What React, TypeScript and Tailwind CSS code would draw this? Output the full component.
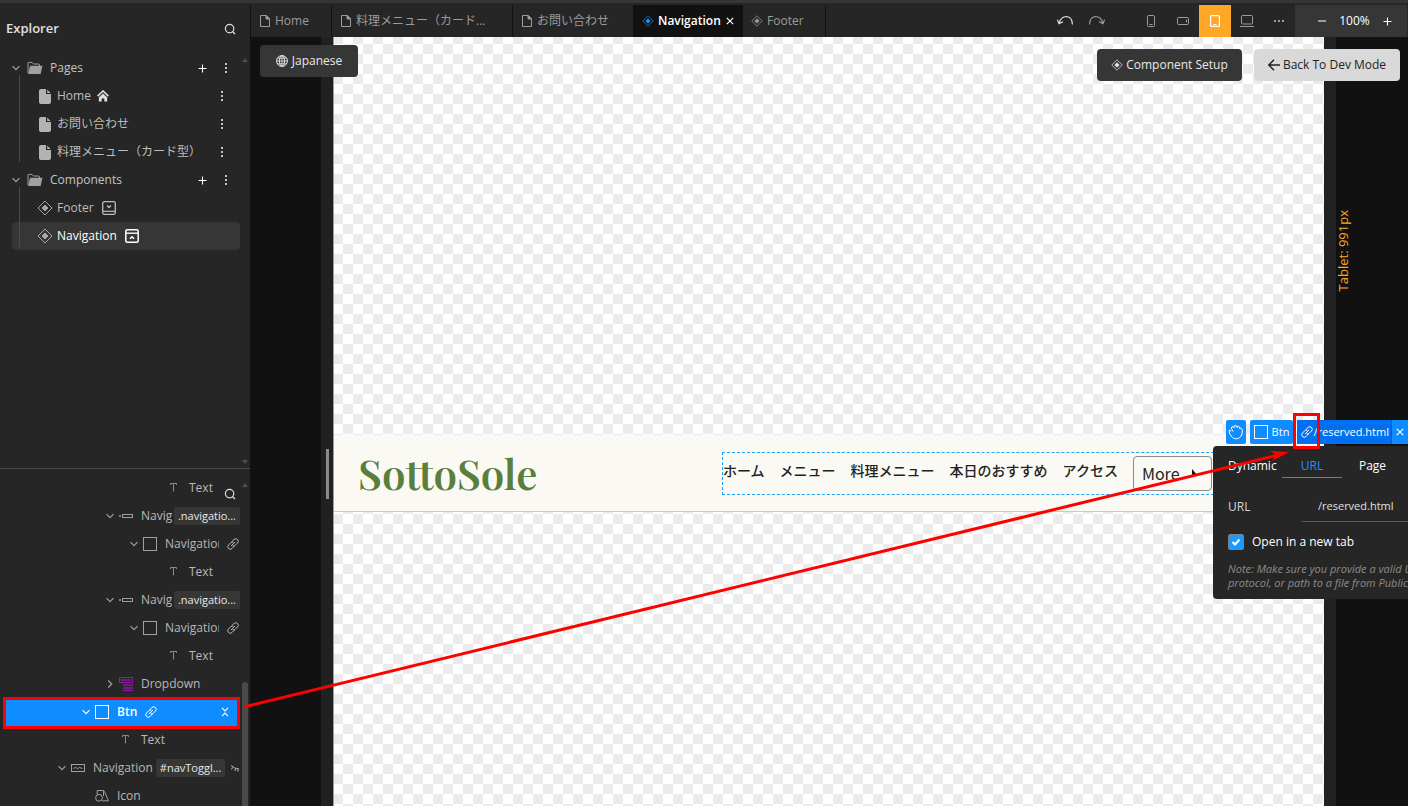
import React, { useState } from "react";

type IconProps = { className?: string };

const stroke = {
  fill: "none",
  stroke: "currentColor",
  "aria-hidden": true,
} as const;

function ChevronIcon({ className = "" }: IconProps) {
  return (
    <svg {...stroke} viewBox="0 0 8 8" className={`w-2 h-2 shrink-0 ${className}`}>
      <path d="M0.5 2.2 4 5.7 7.5 2.2" strokeWidth={1.2} />
    </svg>
  );
}

function SearchIcon() {
  return (
    <svg {...stroke} viewBox="0 0 12 12" className="w-3 h-3">
      <circle cx="5.6" cy="5.6" r="4.2" strokeWidth={1.2} />
      <path d="M8.6 8.6 11 11" strokeWidth={1.3} />
    </svg>
  );
}

function PlusIcon() {
  return (
    <svg {...stroke} viewBox="0 0 9 9" className="w-[9px] h-[9px]">
      <path d="M4.5 0.5v8M0.5 4.5h8" strokeWidth={1.1} />
    </svg>
  );
}

function DotsIcon({ className = "" }: IconProps) {
  return (
    <svg viewBox="0 0 4 12" fill="currentColor" aria-hidden="true" className={`w-1 h-3 ${className}`}>
      <rect x="1" y="1" width="2" height="2" />
      <rect x="1" y="5" width="2" height="2" />
      <rect x="1" y="9" width="2" height="2" />
    </svg>
  );
}

function FolderIcon() {
  return (
    <svg viewBox="0 0 16 14" aria-hidden="true" className="w-4 h-3.5 shrink-0">
      <path d="M1 12V2.2Q1 1.4 1.8 1.4H5L6.5 3H11.5Q12.5 3 12.5 4V5" fill="none" stroke="#a0a0a0" strokeWidth={1} />
      <path d="M3 4.8H15.4L13.8 12.4Q13.6 13 13 13H1.2Z" fill="#a0a0a0" />
    </svg>
  );
}

function FileIcon() {
  return (
    <svg viewBox="0 0 12 15" fill="#b3b3b3" aria-hidden="true" className="w-3 h-[15px] shrink-0">
      <path d="M2 0H7V5H12V13Q12 15 10 15H2Q0 15 0 13V2Q0 0 2 0Z" />
      <path d="M8.2 0.4 11.6 4H8.2Z" />
    </svg>
  );
}

function PageIcon() {
  return (
    <svg {...stroke} viewBox="0 0 10 12" className="w-2.5 h-3 shrink-0">
      <path d="M0.5 0.5H6.5L9.5 3.5V11.5H0.5Z" />
      <path d="M6 0.5V4H9.5Z" fill="currentColor" />
    </svg>
  );
}

function ComponentIcon({ className = "w-3 h-3" }: IconProps) {
  return (
    <svg {...stroke} viewBox="0 0 16 16" className={`shrink-0 ${className}`}>
      <path d="M8 1 15 8 8 15 1 8Z" />
      <path d="M8 5 11 8 8 11 5 8Z" fill="currentColor" />
    </svg>
  );
}

function HomeIcon() {
  return (
    <svg viewBox="0 0 12 12" aria-hidden="true" className="w-3 h-3">
      <path d="M0.6 6.2 6 1 11.4 6.2" fill="none" stroke="#dedede" strokeWidth={1.6} />
      <path d="M6 3.4 10.2 7.4V11.4H7.3V8.4H4.7V11.4H1.8V7.4Z" fill="#dedede" />
    </svg>
  );
}

function FooterIcon() {
  return (
    <svg {...stroke} viewBox="0 0 14 14" className="w-3.5 h-3.5">
      <rect x="0.7" y="0.7" width="12.6" height="12.6" rx="1.5" strokeWidth={1.3} />
      <path d="M1 10.3H13" strokeWidth={1.2} />
      <path d="M5 4.4 7 6.4 9 4.4" strokeWidth={1.4} />
    </svg>
  );
}

function HeaderIcon() {
  return (
    <svg {...stroke} viewBox="0 0 14 14" className="w-3.5 h-3.5">
      <rect x="0.8" y="0.8" width="12.4" height="12.4" rx="1.5" strokeWidth={1.5} />
      <path d="M1 4.2H13" strokeWidth={1.4} />
      <path d="M5 9.8 7 7.8 9 9.8" strokeWidth={1.6} />
    </svg>
  );
}

function LinkIcon({ className = "" }: IconProps) {
  return (
    <svg {...stroke} viewBox="0 0 24 24" strokeWidth={2} strokeLinecap="round" className={`w-3 h-3 shrink-0 ${className}`}>
      <path d="M8.5 15.5 15.5 8.5" />
      <path d="M9.5 7.5 14 3a4.9 4.9 0 0 1 7 7L16.5 14.5a4.9 4.9 0 0 1-4.5 1.3" />
      <path d="M14.5 16.5 10 21a4.9 4.9 0 0 1-7-7L7.5 9.5a4.9 4.9 0 0 1 4.5-1.3" />
    </svg>
  );
}

function SquareIcon() {
  return (
    <svg {...stroke} viewBox="0 0 14 14" className="w-3.5 h-3.5 shrink-0">
      <rect x="0.5" y="0.5" width="13" height="13" />
    </svg>
  );
}

function TextIcon() {
  return (
    <svg {...stroke} viewBox="0 0 8 10" className="w-2 h-2.5 text-[#8c8c8c]">
      <path d="M0.5 2V0.5H6.5V2M3.5 0.5V8.5" />
    </svg>
  );
}

function ListItemIcon() {
  return (
    <svg {...stroke} viewBox="0 0 14 6" className="w-3.5 h-1.5">
      <path d="M0 3H2" strokeWidth={1.6} />
      <rect x="3.5" y="1.5" width="10" height="3" />
    </svg>
  );
}

function DropdownIcon() {
  return (
    <svg viewBox="0 0 14 14" aria-hidden="true" className="w-3.5 h-3.5">
      <rect x="0.5" y="0.5" width="13" height="5" fill="none" stroke="#8e1aa6" />
      <path d="M2 3H12" stroke="#8e1aa6" strokeWidth={2} strokeDasharray="1.6 0.8" />
      <path d="M4 8H14M4 11H14M4 13.5H14" stroke="#8e1aa6" strokeWidth={1.6} />
    </svg>
  );
}

function ToggleIcon() {
  return (
    <svg {...stroke} viewBox="0 0 14 8" className="w-3.5 h-2">
      <rect x="0.5" y="0.5" width="13" height="7" />
      <path d="M2.5 4.5 4.5 3.5 6.5 4.5 8.5 3.5 11.5 4.5" />
    </svg>
  );
}

function ShapesIcon() {
  return (
    <svg {...stroke} viewBox="0 0 14 12" className="w-3.5 h-3">
      <circle cx="4" cy="7.8" r="3.4" />
      <path d="M2.2 4.4V0.5H8.5V6M9.4 1.2 13.4 10.8H7" />
    </svg>
  );
}

function CollapseIcon() {
  return (
    <svg {...stroke} viewBox="0 0 8 10" className="w-2 h-2.5">
      <path d="M1 0.8 4 3.8 7 0.8M1 9.2 4 6.2 7 9.2" strokeWidth={1.2} />
    </svg>
  );
}

function HiddenIcon() {
  return (
    <svg {...stroke} viewBox="0 0 8 8" className="w-2 h-2 shrink-0">
      <path d="M0 1.5Q3 4.5 8 5M1.5 3.5 0.5 5.5M4.5 4.5 4 7M7 5V7.5" />
    </svg>
  );
}

function CloseIcon() {
  return (
    <svg {...stroke} viewBox="0 0 8 8" className="w-2 h-2">
      <path d="M0.8 0.8 7.2 7.2M7.2 0.8 0.8 7.2" strokeWidth={1.2} />
    </svg>
  );
}

function UndoIcon({ className = "" }: IconProps) {
  return (
    <svg {...stroke} viewBox="0 0 16 12" className={`w-4 h-3 ${className}`}>
      <path d="M2.2 8Q4 1.5 9.5 1.5 15.4 2 15.4 9.6" strokeWidth={1.2} />
      <path d="M0.4 4.6 2 8.6 6 6.8" strokeWidth={1.2} />
    </svg>
  );
}

function PhoneIcon() {
  return (
    <svg {...stroke} viewBox="0 0 8 12" className="w-2 h-3">
      <rect x="0.5" y="0.5" width="7" height="11" rx="1" />
      <path d="M2.5 9.5H5.5" />
    </svg>
  );
}

function LandscapeIcon() {
  return (
    <svg {...stroke} viewBox="0 0 12 8" className="w-3 h-2">
      <rect x="0.5" y="0.5" width="11" height="7" rx="1" />
      <path d="M9.5 2.5V5.5" />
    </svg>
  );
}

function TabletIcon() {
  return (
    <svg {...stroke} viewBox="0 0 10 12" className="w-2.5 h-3">
      <rect x="0.6" y="0.6" width="8.8" height="10.8" rx="1" strokeWidth={1.2} />
      <path d="M3.5 9.5H6.5" />
    </svg>
  );
}

function LaptopIcon() {
  return (
    <svg {...stroke} viewBox="0 0 14 12" className="w-3.5 h-3">
      <rect x="1.5" y="0.5" width="11" height="8.5" rx="1" />
      <path d="M0 11.5H14" />
    </svg>
  );
}

function GlobeIcon() {
  return (
    <svg {...stroke} viewBox="0 0 12 12" className="w-3 h-3">
      <circle cx="6" cy="6" r="5.4" />
      <ellipse cx="6" cy="6" rx="2.5" ry="5.4" />
      <path d="M6 0.6V11.4M0.6 6H11.4M1.5 3.2H10.5M1.5 8.8H10.5" strokeWidth={0.8} />
    </svg>
  );
}

function BackIcon() {
  return (
    <svg {...stroke} viewBox="0 0 12 12" className="w-3 h-3">
      <path d="M12 6H1M6 0.8 0.8 6 6 11.2" strokeWidth={1.5} />
    </svg>
  );
}

function HandIcon() {
  return (
    <svg {...stroke} viewBox="0 0 16 16" className="w-4 h-4" strokeLinejoin="round">
      <path d="M3.2 7.2 1.4 6Q0.6 8 2 10.2 4 14.6 8.2 14.8 12.6 14.6 14 10 15 7 13.6 4.6 12.6 3.4 11.8 4.8 12 2.4 10.4 2.2 9 2.2 9.2 3.6 8.6 1.2 7 1.4 5.6 1.8 6.2 3.6 5 2 3.8 3 3 4 3.8 5.4L5 7.6" />
    </svg>
  );
}

function ScrollArrow({ down = false }: { down?: boolean }) {
  return (
    <svg viewBox="0 0 6 4" fill="#4d4d4d" aria-hidden="true" className={`w-1.5 h-1 ${down ? "rotate-180" : ""}`}>
      <path d="M3 0 6 4H0Z" />
    </svg>
  );
}

function GroupRow({ label, bold = false }: { label: string; bold?: boolean }) {
  return (
    <div className="flex items-center h-7 pl-3 pr-[22px]">
      <ChevronIcon className="text-[#a0a0a0]" />
      <span className="ml-[7px] flex">
        <FolderIcon />
      </span>
      <span className={`ml-[7px] flex-1 text-[#c4c4c4] ${bold ? "font-medium" : ""}`}>{label}</span>
      <button aria-label={`Add to ${label}`} className="mr-[17px] text-white">
        <PlusIcon />
      </button>
      <button aria-label={`${label} options`} className="text-[#c4c4c4]">
        <DotsIcon />
      </button>
    </div>
  );
}

function PageRow({ label, home = false }: { label: string; home?: boolean }) {
  return (
    <li className="flex items-center h-7 pl-[27px] pr-[16px] text-[#bdbdbd]">
      <FileIcon />
      <span className="ml-1.5 whitespace-nowrap">{label}</span>
      {home && (
        <span className="ml-1.5">
          <HomeIcon />
        </span>
      )}
      <button aria-label={`${label} options`} className="ml-auto text-[#c4c4c4]">
        <DotsIcon />
      </button>
    </li>
  );
}

type Node = {
  indent: string;
  icon: React.ReactNode;
  label: string;
  chevron?: "open" | "closed";
  tag?: string;
  link?: boolean;
  hidden?: boolean;
  selected?: boolean;
};

const nodes: Node[] = [
  { indent: "pl-[150px]", icon: <TextIcon />, label: "Text" },
  { indent: "pl-[102px]", icon: <ListItemIcon />, label: "Navig", chevron: "open", tag: ".navigatio..." },
  { indent: "pl-[126px]", icon: <SquareIcon />, label: "Navigation", chevron: "open", link: true },
  { indent: "pl-[150px]", icon: <TextIcon />, label: "Text" },
  { indent: "pl-[102px]", icon: <ListItemIcon />, label: "Navig", chevron: "open", tag: ".navigatio..." },
  { indent: "pl-[126px]", icon: <SquareIcon />, label: "Navigation", chevron: "open", link: true },
  { indent: "pl-[150px]", icon: <TextIcon />, label: "Text" },
  { indent: "pl-[102px]", icon: <DropdownIcon />, label: "Dropdown", chevron: "closed" },
  { indent: "pl-[75px]", icon: <SquareIcon />, label: "Btn", chevron: "open", link: true, selected: true },
  { indent: "pl-[102px]", icon: <TextIcon />, label: "Text" },
  { indent: "pl-[54px]", icon: <ToggleIcon />, label: "Navigation", chevron: "open", tag: "#navToggl...", hidden: true },
  { indent: "pl-[78px]", icon: <ShapesIcon />, label: "Icon" },
];

function TreeRow({ node }: { node: Node }) {
  const iconColor = node.selected ? "text-white" : "text-[#a0a0a0]";
  return (
    <li
      className={`relative flex items-center h-7 mr-[10px] ${node.indent} ${
        node.selected ? "ml-[3px] bg-[#0f8cff] text-white font-semibold" : "text-[#b8b8b8]"
      }`}
    >
      <span className={`flex w-4 shrink-0 justify-center ${iconColor}`}>
        {node.chevron && <ChevronIcon className={node.chevron === "closed" ? "-rotate-90" : ""} />}
      </span>
      <span className={`flex w-4 shrink-0 justify-center ${iconColor}`}>{node.icon}</span>
      <span
        className={`ml-[7px] whitespace-nowrap ${
          node.link && !node.selected ? "w-[54px] shrink-0 overflow-hidden" : ""
        }`}
      >
        {node.label}
      </span>
      {node.tag && (
        <span
          className={`flex shrink-0 items-center h-[18px] rounded-xs bg-[#363636] px-1 text-[11px] font-medium text-[#e8e8e8] whitespace-nowrap ${
            node.hidden ? "ml-[3px] mr-1.5 bg-[#444]" : "ml-auto"
          }`}
        >
          {node.tag}
        </span>
      )}
      {node.link && <LinkIcon className="ml-2" />}
      {node.selected && (
        <button aria-label="Collapse" className="ml-auto mr-[11px]">
          <CollapseIcon />
        </button>
      )}
      {node.hidden && <HiddenIcon />}
      {/* callout frame round the selected layer */}
      {node.selected && <span className="absolute inset-x-0 -top-px -bottom-[3px] border-3 border-[#ff0000]" />}
    </li>
  );
}

function Sidebar() {
  return (
    <aside className="flex flex-col w-[250px] shrink-0 bg-[#262626] text-xs text-[#c4c4c4]">
      <section className="relative flex flex-col h-[466px] shrink-0 border-b border-[#4a4a4a]">
        <header className="flex items-center justify-between h-[51px] pl-1.5 pr-[14px]">
          <h1 className="text-[13px] font-semibold text-[#e0e0e0]">Explorer</h1>
          <button aria-label="Search files" className="text-[#e0e0e0]">
            <SearchIcon />
          </button>
        </header>
        <GroupRow label="Pages" />
        <ul className="ml-3 mr-[10px]">
          <PageRow label="Home" home />
          <PageRow label="お問い合わせ" />
          <PageRow label="料理メニュー（カード型）" />
        </ul>
        <GroupRow label="Components" bold />
        <ul className="ml-3 mr-[10px]">
          <li className="flex items-center h-7 pl-[25px] text-[#bdbdbd]">
            <ComponentIcon className="w-4 h-4 text-[#a6a6a6]" />
            <span className="ml-1">Footer</span>
            <span className="ml-2">
              <FooterIcon />
            </span>
          </li>
          <li className="flex items-center h-7 pl-[25px] rounded-sm bg-[#363636] text-white">
            <ComponentIcon className="w-4 h-4 text-[#a6a6a6]" />
            <span className="ml-1">Navigation</span>
            <span className="ml-2">
              <HeaderIcon />
            </span>
          </li>
        </ul>
        {/* tree guides */}
        <span className="absolute left-[19px] top-[72px] h-[87px] w-px bg-[#4a4a4a]" />
        <span className="absolute left-[19px] top-[184px] h-[60px] w-px bg-[#4a4a4a]" />
        <span className="absolute right-0.5 top-[55px]">
          <ScrollArrow />
        </span>
        <span className="absolute right-0.5 bottom-1">
          <ScrollArrow down />
        </span>
      </section>
      <section className="relative flex-1 min-h-0 overflow-hidden pt-[5px]">
        <ul>
          {nodes.map((node, i) => (
            <TreeRow key={i} node={node} />
          ))}
        </ul>
        <button aria-label="Search layers" className="absolute right-[14px] top-[19px] text-[#e0e0e0]">
          <SearchIcon />
        </button>
        <span className="absolute right-0.5 top-[14px]">
          <ScrollArrow />
        </span>
        <span className="absolute right-0.5 top-[213px] bottom-0 w-1.5 rounded-t-full bg-[#4a4a4a]" />
      </section>
    </aside>
  );
}

function TabBar() {
  const tab = "flex items-center h-8 border-l border-[#111] text-[#9c9c9c] whitespace-nowrap";
  return (
    <div className="flex items-center h-8 mt-0.5 text-xs">
      <button className={`${tab} w-[81px] pl-[9px] gap-[5px]`}>
        <PageIcon />
        Home
      </button>
      <button className={`${tab} w-[181px] pl-[9px] gap-[5px]`}>
        <PageIcon />
        料理メニュー（カード...
      </button>
      <button className={`${tab} w-[121px] pl-[9px] gap-[5px]`}>
        <PageIcon />
        お問い合わせ
      </button>
      <div className="flex items-center h-8 w-[110px] pl-[9px] bg-[#111] text-white">
        <button className="flex items-center gap-1 font-semibold">
          <ComponentIcon className="w-3 h-3 text-[#1a96f5]" />
          Navigation
        </button>
        <button aria-label="Close Navigation" className="ml-auto mr-[9px]">
          <CloseIcon />
        </button>
      </div>
      <button className="flex items-center h-8 w-[83px] pl-2 gap-1 border-r border-[#111] text-[#9c9c9c]">
        <ComponentIcon />
        Footer
      </button>
      <div className="ml-auto flex items-center h-8 text-[#9c9c9c]">
        <button aria-label="Undo" className="flex w-8 justify-center text-[#e0e0e0]">
          <UndoIcon />
        </button>
        <button aria-label="Redo" className="flex w-8 justify-center mr-[22px]">
          <UndoIcon className="-scale-x-100" />
        </button>
        <button aria-label="Phone" className="flex w-8 justify-center">
          <PhoneIcon />
        </button>
        <button aria-label="Phone landscape" className="flex w-8 justify-center">
          <LandscapeIcon />
        </button>
        <button aria-label="Tablet" className="flex w-8 h-8 items-center justify-center bg-[#ffa726] text-white">
          <TabletIcon />
        </button>
        <button aria-label="Laptop" className="flex w-8 justify-center">
          <LaptopIcon />
        </button>
        <button aria-label="More sizes" className="flex w-8 justify-center">
          <DotsIcon className="rotate-90" />
        </button>
        <div className="flex items-center justify-between h-8 w-[112px] mr-px pl-[23px] pr-[15px] bg-[#363636] text-white">
          <button aria-label="Zoom out" className="w-2 h-2.5 flex items-center">
            <span className="block w-full h-0.5 bg-[#9c9c9c]" />
          </button>
          <span>100%</span>
          <button aria-label="Zoom in">
            <PlusIcon />
          </button>
        </div>
      </div>
    </div>
  );
}

function SiteNavigation() {
  const links = ["ホーム", "メニュー", "料理メニュー", "本日のおすすめ", "アクセス"];
  return (
    <nav className="flex items-center justify-between h-[77px] pl-6 pr-[25px] border-b border-[#cfc8c0] bg-[#faf9f4]">
      <span className="font-['Playfair_Display','Liberation_Serif',serif] text-[42px] leading-[56px] font-semibold text-[#5a7f3c]">
        SottoSole
      </span>
      <div className="flex h-[43px] w-[577px] border border-dashed border-[#1aa3ff] font-['Noto_Sans_CJK_JP',sans-serif] text-sm font-medium text-[#222]">
        <div className="flex gap-[15px] whitespace-nowrap">
          {links.map((link) => (
            <a key={link} href="#" className="leading-[34px]">
              {link}
            </a>
          ))}
          <button className="flex items-center h-[35px] w-[79px] mt-[3px] pl-2 gap-3 rounded-sm border border-[#8c8c8c] text-base font-normal">
            More
            <svg viewBox="0 0 6 8" fill="#111" aria-hidden="true" className="w-1.5 h-2">
              <path d="M0 0 6 7H0Z" />
            </svg>
          </button>
        </div>
      </div>
    </nav>
  );
}

function LinkSettings() {
  const [newTab, setNewTab] = useState(true);
  return (
    <div className="absolute right-0 top-[383px] w-[195px] text-xs">
      <div className="flex h-6 ml-[13px] text-white">
        <button aria-label="Move" className="flex items-center justify-center w-5 mr-1 rounded-xs bg-[#0f8cff]">
          <HandIcon />
        </button>
        <button className="flex items-center justify-center gap-1 w-[43px] mr-1 rounded-xs bg-[#0f8cff] text-[11px]">
          <SquareIcon />
          Btn
        </button>
        <button className="relative flex items-center w-[94px] pl-1 bg-[#0070f0] text-[11px] whitespace-nowrap">
          <LinkIcon />
          <span className="ml-auto mr-0.5">/reserved.html</span>
          {/* callout frame round the link button */}
          <span className="absolute -left-1 -top-[7px] w-[27px] h-9 border-3 border-[#ff0000]" />
        </button>
        <button aria-label="Close" className="flex flex-1 items-center justify-center border-l border-[#0a5cc0] bg-[#0f8cff]">
          <CloseIcon />
        </button>
      </div>
      <div className="mt-0.5 h-[153px] overflow-hidden rounded-l-sm bg-[#262626] pl-[15px] text-white">
        <div className="flex h-8 items-stretch">
          <button className="w-[54px] pt-2 text-left">Dynamic</button>
          <button className="w-[60px] pt-2 border-b border-[#1a96f5] text-[#1a96f5]">URL</button>
          <button className="w-[61px] pt-2">Page</button>
        </div>
        <div className="flex h-[44px] items-end">
          <label htmlFor="url" className="w-[74px] pb-[7px] text-[#d6d6d6]">
            URL
          </label>
          <input
            id="url"
            defaultValue="/reserved.html"
            className="h-8 min-w-0 flex-1 pl-4 border-b border-[#5c5c5c] bg-transparent text-[11px] text-[#e0e0e0] outline-none"
          />
        </div>
        <label className="relative flex h-[40px] items-center gap-2">
          <input
            type="checkbox"
            checked={newTab}
            onChange={(e) => setNewTab(e.target.checked)}
            className="w-4 h-4 appearance-none rounded-xs border border-[#808080] checked:bg-[#1a9bff]"
          />
          {newTab && (
            <svg {...stroke} viewBox="0 0 16 16" className="absolute left-0 w-4 h-4">
              <path d="M4.5 8 7 10.5 11.5 5.5" strokeWidth={2} />
            </svg>
          )}
          Open in a new tab
        </label>
        <p className="text-[11px] leading-[14px] italic text-[#8c8c8c] whitespace-nowrap">
          Note: Make sure you provide a valid U
          <br />
          protocol, or path to a file from Public,
        </p>
      </div>
    </div>
  );
}

function Workspace() {
  return (
    <div className="relative flex flex-1 min-h-0 bg-[#111]">
      <div className="w-[71px] shrink-0" />
      <div className="w-[13px] shrink-0 bg-[#212124] border-r border-[#a39a90]">
        <div className="ml-[5px] mt-[412px] h-[50px] w-[3px] bg-[#8c8c8c]" />
      </div>
      <div className="flex-1 min-w-0 bg-[conic-gradient(#fff_25%,#ebebeb_0_50%,#fff_0_75%,#ebebeb_0)] bg-size-[20px_20px] bg-position-[-1px_17px]">
        <div className="mt-[398px]">
          <SiteNavigation />
        </div>
      </div>
      <div className="w-3 shrink-0 bg-[#212124]" />
      <div className="w-[72px] shrink-0">
        <span className="mt-[173px] block rotate-180 text-[13px] leading-[14px] text-[#ffa726] [writing-mode:vertical-rl] whitespace-nowrap">
          Tablet: 991px
        </span>
      </div>

      <button className="absolute left-2.5 top-2 flex items-center justify-center gap-1 h-8 w-[98px] rounded-sm bg-[#363636] text-xs text-[#e8e8e8]">
        <GlobeIcon />
        Japanese
      </button>
      <div className="absolute right-2 top-3 flex gap-3 text-xs">
        <button className="flex items-center justify-center gap-[3px] h-8 w-[145px] rounded-sm bg-[#363636] text-[#e8e8e8]">
          <ComponentIcon />
          Component Setup
        </button>
        <button className="flex items-center justify-center gap-[3px] h-8 w-[146px] rounded-sm bg-[#d9d9d9] text-[#222]">
          <BackIcon />
          Back To Dev Mode
        </button>
      </div>
      <LinkSettings />
    </div>
  );
}

export default function App() {
  return (
    <div className="relative flex h-screen flex-col overflow-hidden bg-[#262626] font-['Open_Sans','Noto_Sans_CJK_JP',sans-serif]">
      <div className="h-[3px] shrink-0 bg-[#363636]" />
      <div className="flex flex-1 min-h-0">
        <Sidebar />
        <main className="flex flex-1 min-w-0 flex-col">
          <TabBar />
          <Workspace />
        </main>
      </div>
      {/* arrow from the layer to its link settings */}
      <svg aria-hidden="true" className="pointer-events-none absolute inset-0 w-full h-full">
        <path d="M244 707 1278 455" stroke="#ff0000" strokeWidth={3} />
        <path d="M1289 452 1270 451 1276 455 1272 461Z" fill="#ff0000" />
      </svg>
    </div>
  );
}
